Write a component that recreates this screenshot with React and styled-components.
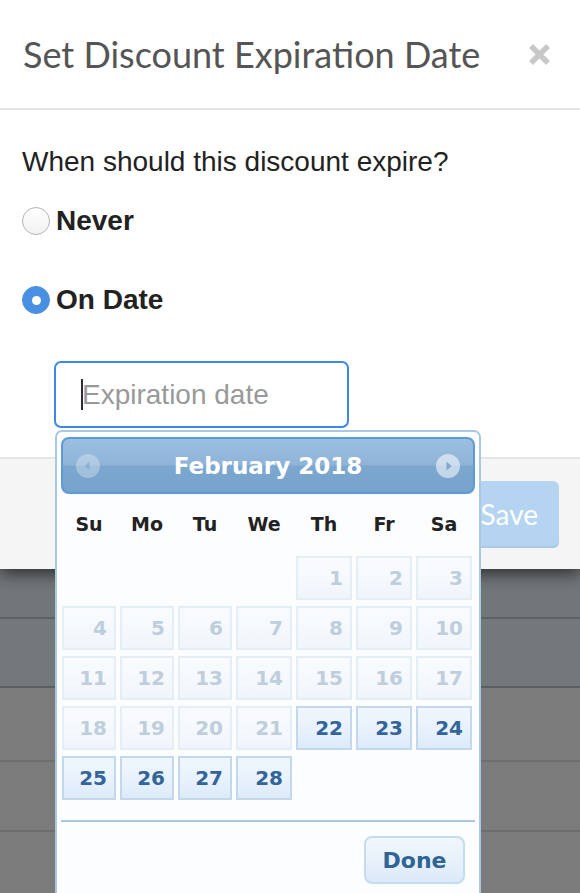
import React from 'react'
import styled, { createGlobalStyle } from 'styled-components'

const GlobalStyle = createGlobalStyle`
  html, body {
    margin: 0;
    padding: 0;
    background: #7b7b7b;
  }
  * {
    box-sizing: border-box;
  }
`

const DAY_NAMES = ['Su', 'Mo', 'Tu', 'We', 'Th', 'Fr', 'Sa']
const FIRST_WEEKDAY = 4
const DAYS_IN_MONTH = 28
const FIRST_ENABLED = 22

const BACKDROP_ROWS = [
  { height: 48, tone: '#717679', line: '#5e6264' },
  { height: 67, tone: '#73787a', line: '#5b5f61' },
  { height: 72, tone: '#7b7b7b', line: '#6e6e6e' },
  { height: 68, tone: '#7b7b7b', line: '#6d6d6d' },
  { height: 80, tone: '#7b7b7b', line: 'transparent' },
]

const App = () => {
  const blanks = Array.from({ length: FIRST_WEEKDAY })
  const days = Array.from({ length: DAYS_IN_MONTH }, (_, i) => i + 1)

  return (
    <React.Fragment>
      <GlobalStyle />
      <Page>
        <Modal>
          <Header>
            <Title>Set Discount Expiration Date</Title>
            <CloseBtn aria-label="Close">
              <svg width="23" height="23" viewBox="0 0 23 23">
                <path d="M3 3 L20 20 M20 3 L3 20" stroke="#c8c8c8" strokeWidth="5.5" />
              </svg>
            </CloseBtn>
          </Header>

          <Body>
            <Question>When should this discount expire?</Question>
            <Option>
              <Radio />
              <OptionLabel>Never</OptionLabel>
            </Option>
            <Option spaced>
              <Radio checked />
              <OptionLabel>On Date</OptionLabel>
            </Option>

            <FieldWrap>
              <Field>
                <Caret />
                <Placeholder>Expiration date</Placeholder>
              </Field>

              <Picker>
                <PickerHeader>
                  <NavBtn aria-label="Prev">
                    <svg width="24" height="24" viewBox="0 0 24 24">
                      <circle cx="12" cy="12" r="12" fill="rgba(255,255,255,0.3)" />
                      <path d="M13.5 7.5 L8.5 12 L13.5 16.5 Z" fill="rgba(120,160,200,0.55)" />
                    </svg>
                  </NavBtn>
                  <MonthTitle>February 2018</MonthTitle>
                  <NavBtn aria-label="Next">
                    <svg width="24" height="24" viewBox="0 0 24 24">
                      <circle cx="12" cy="12" r="12" fill="rgba(255,255,255,0.55)" />
                      <path d="M10.5 7.5 L15.5 12 L10.5 16.5 Z" fill="#7ea8d0" />
                    </svg>
                  </NavBtn>
                </PickerHeader>

                <Grid>
                  {DAY_NAMES.map((d) => (
                    <DayName key={d}>{d}</DayName>
                  ))}
                </Grid>

                <Grid cells>
                  {blanks.map((_, i) => (
                    <span key={'b' + i} />
                  ))}
                  {days.map((d) => (
                    <Day key={d} enabled={d >= FIRST_ENABLED}>
                      {d}
                    </Day>
                  ))}
                </Grid>

                <PickerFooter>
                  <DoneBtn>Done</DoneBtn>
                </PickerFooter>
              </Picker>
            </FieldWrap>
          </Body>

          <Footer>
            <SaveBtn>Save</SaveBtn>
          </Footer>
        </Modal>

        <Backdrop>
          {BACKDROP_ROWS.map((r, i) => (
            <BackdropRow key={i} height={r.height} tone={r.tone} line={r.line} />
          ))}
        </Backdrop>
      </Page>
    </React.Fragment>
  )
}

const Page = styled.div`
  display: flex;
  flex-direction: column;
  width: 580px;
  min-height: 893px;
  overflow: hidden;
`

const Modal = styled.div`
  position: relative;
  z-index: 1;
  background: #fff;
  box-shadow: 0 4px 16px rgba(0, 0, 0, 0.65);
`

const Header = styled.div`
  display: flex;
  align-items: center;
  justify-content: space-between;
  height: 110px;
  padding: 0 29px 0 23px;
  border-bottom: 2px solid #e5e5e5;
`

const Title = styled.h1`
  margin: 0;
  font-family: Lato, 'Liberation Sans', sans-serif;
  font-size: 36px;
  font-weight: 400;
  color: #555;
`

const CloseBtn = styled.button`
  display: flex;
  padding: 0;
  border: none;
  background: none;
  cursor: pointer;
`

const Body = styled.div`
  padding: 36px 22px 29px 22px;
  font-family: 'Liberation Sans', Arial, sans-serif;
  color: #222;
`

const Question = styled.p`
  margin: 0 0 27px 0;
  font-size: 28px;
  line-height: 32px;
`

const Option = styled.label`
  display: flex;
  align-items: center;
  gap: 6px;
  height: 32px;
  margin-top: ${(p) => (p.spaced ? '47px' : '0')};
`

const Radio = styled.span`
  width: 28px;
  height: 28px;
  border-radius: 50%;
  flex-shrink: 0;
  display: flex;
  align-items: center;
  justify-content: center;
  background: ${(p) => (p.checked ? '#4a90e2' : 'linear-gradient(#fff, #f2f2f2)')};
  border: 1px solid ${(p) => (p.checked ? '#4a90e2' : '#b3b3b3')};

  &::after {
    content: '';
    display: ${(p) => (p.checked ? 'block' : 'none')};
    width: 9px;
    height: 9px;
    border-radius: 50%;
    background: #fff;
  }
`

const OptionLabel = styled.span`
  font-size: 28px;
  font-weight: 700;
`

const FieldWrap = styled.div`
  position: relative;
  width: 295px;
  margin: 45px 0 0 32px;
`

const Field = styled.div`
  display: flex;
  align-items: center;
  height: 67px;
  padding-left: 25px;
  border: 2px solid #3d89e6;
  border-radius: 7px;
  background: #fff;
`

const Caret = styled.span`
  width: 2px;
  height: 31px;
  background: #2b2b3a;
  margin-right: -1px;
`

const Placeholder = styled.span`
  font-size: 28px;
  color: #999;
`

const Picker = styled.div`
  position: absolute;
  top: calc(100% + 2px);
  left: 1px;
  z-index: 2;
  width: 426px;
  padding: 5px 4px 20px 4px;
  border: 2px solid #aac8e2;
  border-radius: 7px;
  background: #fcfdfe;
  font-family: 'DejaVu Sans', Verdana, sans-serif;
`

const PickerHeader = styled.div`
  display: flex;
  align-items: center;
  justify-content: space-between;
  height: 57px;
  padding: 0 13px;
  border: 2px solid #5e9ad4;
  border-radius: 8px;
  background: linear-gradient(#9bbfe0 0%, #8fb4d8 48%, #7ca7cf 52%, #76a3cc 100%);
`

const NavBtn = styled.span`
  display: flex;
  width: 24px;
  height: 24px;
`

const MonthTitle = styled.span`
  font-size: 23px;
  font-weight: 700;
  color: #fff;
`

const Grid = styled.div`
  display: grid;
  grid-template-columns: repeat(3, 54px) repeat(4, 56px);
  column-gap: 4px;
  row-gap: 6px;
  padding: 0 1px;
  ${(p) => (p.cells ? 'margin-top: 4px;' : 'height: 56px; margin-top: 2px;')}
`

const DayName = styled.span`
  display: flex;
  align-items: center;
  justify-content: center;
  font-size: 19px;
  font-weight: 700;
  color: #222;
`

const Day = styled.span`
  height: 44px;
  padding-right: 7px;
  line-height: 40px;
  text-align: right;
  font-size: 20px;
  font-weight: 700;
  border: 2px solid ${(p) => (p.enabled ? '#c3d8ec' : '#e5edf5')};
  background: ${(p) =>
    p.enabled
      ? 'linear-gradient(#eff6fd 0%, #e9f2fc 50%, #dcebfa 100%)'
      : 'linear-gradient(#f9fbfe 0%, #f5f9fd 50%, #f0f5fb 100%)'};
  color: ${(p) => (p.enabled ? '#33649a' : '#bfcedc')};
`

const PickerFooter = styled.div`
  display: flex;
  justify-content: flex-end;
  margin-top: 20px;
  padding: 14px 10px 0 0;
  border-top: 2px solid #a9c7e1;
`

const DoneBtn = styled.button`
  width: 101px;
  height: 48px;
  padding: 0;
  border: 2px solid #c5dbee;
  border-radius: 8px;
  background: linear-gradient(#f1f7fd 0%, #e8f1fb 50%, #dbe9f8 100%);
  font-family: 'DejaVu Sans', Verdana, sans-serif;
  font-size: 22px;
  font-weight: 700;
  color: #2e6496;
  cursor: pointer;
`

const Footer = styled.div`
  display: flex;
  align-items: center;
  justify-content: flex-end;
  height: 112px;
  padding-right: 21px;
  background: #f5f5f5;
  border-top: 2px solid #e5e5e5;
`

const SaveBtn = styled.button`
  height: 67px;
  padding: 0 21px;
  border: none;
  border-radius: 6px;
  background: #b4d4f2;
  box-shadow: inset 0 -2px 0 #a8c8e6;
  font-family: Lato, 'Liberation Sans', sans-serif;
  font-size: 28px;
  color: #fff;
`

const Backdrop = styled.div`
  display: flex;
  flex-direction: column;
  flex: 1;
  background: #7b7b7b;
`

const BackdropRow = styled.div`
  flex-shrink: 0;
  height: ${(p) => p.height + 2}px;
  background: ${(p) => p.tone};
  border-bottom: 2px solid ${(p) => p.line};
`

export default App
